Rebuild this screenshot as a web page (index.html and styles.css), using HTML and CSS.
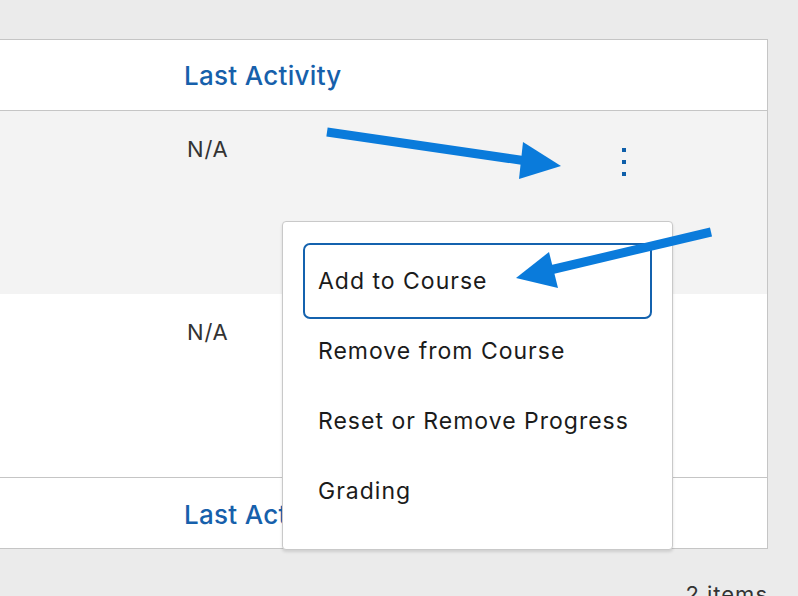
FILE: index.html
```html
<!DOCTYPE html>
<html lang="en">
<head>
<meta charset="utf-8">
<title>Learners</title>
<link rel="stylesheet" href="styles.css">
</head>
<body>
<div class="page">
  <div class="table">
    <div class="row head">
      <div class="cell label">Last Activity</div>
    </div>
    <div class="row body shaded">
      <div class="cell value">N/A</div>
      <div class="cell actions">
        <button class="kebab" aria-label="Actions">
          <svg width="4" height="28" viewBox="0 0 4 28"><rect x="0" y="0" width="4" height="4"/><rect x="0" y="12" width="4" height="4"/><rect x="0" y="24" width="4" height="4"/></svg>
        </button>
      </div>
    </div>
    <div class="row body plain">
      <div class="cell value">N/A</div>
    </div>
    <div class="row foot">
      <div class="cell label">Last Activity</div>
    </div>
    <ul class="menu">
      <li class="item focused">Add to Course</li>
      <li class="item">Remove from Course</li>
      <li class="item">Reset or Remove Progress</li>
      <li class="item">Grading</li>
    </ul>
  </div>
  <div class="count">2 items</div>
</div>
<svg class="arrows" width="798" height="596" viewBox="0 0 798 596">
  <line x1="327" y1="132" x2="530" y2="161.5" class="shaft"/>
  <polygon points="523,142 561,166 519,179" class="head"/>
  <line x1="711" y1="232" x2="548" y2="270.5" class="shaft"/>
  <polygon points="549,252 516,278 558,288" class="head"/>
</svg>
</body>
</html>
```
FILE: styles.css
```css
html, body {
  margin: 0;
  padding: 0;
}
body {
  background: #ebebeb;
  font-family: Inter, "Liberation Sans", Arial, sans-serif;
  width: 798px;
  height: 596px;
  overflow: hidden;
  position: relative;
}
.page {
  padding-top: 39px;
}
.table {
  position: relative;
  box-sizing: border-box;
  margin-left: -2px;
  width: 770px;
  border: 1px solid #c5c5c5;
  background: #ffffff;
}
.row {
  display: grid;
  grid-template-columns: 185px 1fr 145px;
  box-sizing: border-box;
}
.head {
  height: 71px;
  border-bottom: 1px solid #c5c5c5;
  align-items: center;
}
.foot {
  height: 70px;
  align-items: center;
  padding-top: 3px;
}
.body {
  height: 183px;
  align-items: start;
}
.shaded {
  background: #f3f3f3;
}
.plain {
  height: 184px;
  border-bottom: 1px solid #c5c5c5;
}
.label {
  grid-column: 2;
  color: #1660ab;
  font-size: 26px;
  font-weight: 500;
  line-height: 30px;
  letter-spacing: 0.3px;
  padding-top: 1px;
}
.value {
  grid-column: 2;
  padding-top: 24px;
  padding-left: 3px;
  color: #333333;
  font-size: 22px;
  line-height: 28px;
  letter-spacing: 0.8px;
}
.actions {
  grid-column: 3;
  padding-top: 37px;
}
.kebab {
  display: block;
  border: 0;
  padding: 0;
  margin: 0;
  background: none;
  fill: #0d5ea9;
  line-height: 0;
}
.menu {
  position: absolute;
  left: 283px;
  top: 181px;
  box-sizing: border-box;
  width: 391px;
  height: 329px;
  margin: 0;
  padding: 24px 0 23px;
  list-style: none;
  background: #ffffff;
  border: 1px solid #c9c9c9;
  border-radius: 4px;
  box-shadow: 0 2px 3px rgba(0, 0, 0, 0.12);
  z-index: 2;
}
.item {
  height: 70px;
  margin: 0 23px;
  padding-left: 12px;
  display: flex;
  align-items: center;
  font-size: 23px;
  letter-spacing: 1px;
  color: #1b1b1b;
  border-radius: 4px;
}
.focused {
  outline: 2px solid #1462ae;
  outline-offset: 1px;
}
.count {
  width: 768px;
  margin-top: 32px;
  text-align: right;
  font-size: 22px;
  letter-spacing: 1px;
  color: #333333;
}
.arrows {
  position: absolute;
  left: 0;
  top: 0;
  z-index: 5;
  pointer-events: none;
}
.shaft {
  stroke: #0a7bdb;
  stroke-width: 9;
}
.head {
  fill: #0a7bdb;
}
```
